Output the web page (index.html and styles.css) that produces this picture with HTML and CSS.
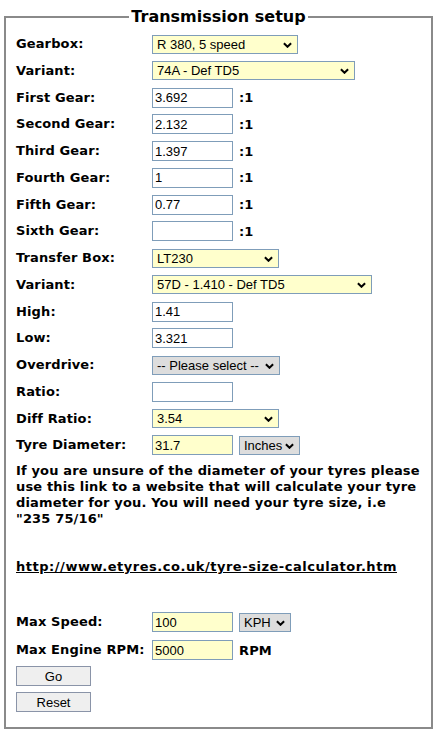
FILE: index.html
```html
<!DOCTYPE html>
<html>
<head>
<meta charset="utf-8">
<link rel="stylesheet" href="styles.css">
</head>
<body>
<form class="setup">
<fieldset class="box">
<legend class="title">Transmission setup</legend>
<div class="grid">
  <label class="lbl">Gearbox:</label>
  <div class="cell"><span class="sel w146 yellow"><span class="txt">R 380, 5 speed</span><svg class="chev" viewBox="0 0 10 6"><path d="M1 1 L5 5 L9 1" /></svg></span></div>

  <label class="lbl">Variant:</label>
  <div class="cell"><span class="sel w203 yellow"><span class="txt">74A - Def TD5</span><svg class="chev" viewBox="0 0 10 6"><path d="M1 1 L5 5 L9 1" /></svg></span></div>

  <label class="lbl">First Gear:</label>
  <div class="cell"><input class="inp" value="3.692"><span class="suffix">:1</span></div>

  <label class="lbl">Second Gear:</label>
  <div class="cell"><input class="inp" value="2.132"><span class="suffix">:1</span></div>

  <label class="lbl">Third Gear:</label>
  <div class="cell"><input class="inp" value="1.397"><span class="suffix">:1</span></div>

  <label class="lbl">Fourth Gear:</label>
  <div class="cell"><input class="inp" value="1"><span class="suffix">:1</span></div>

  <label class="lbl">Fifth Gear:</label>
  <div class="cell"><input class="inp" value="0.77"><span class="suffix">:1</span></div>

  <label class="lbl">Sixth Gear:</label>
  <div class="cell"><input class="inp" value=""><span class="suffix">:1</span></div>

  <label class="lbl">Transfer Box:</label>
  <div class="cell"><span class="sel w127 yellow"><span class="txt">LT230</span><svg class="chev" viewBox="0 0 10 6"><path d="M1 1 L5 5 L9 1" /></svg></span></div>

  <label class="lbl">Variant:</label>
  <div class="cell"><span class="sel w220 yellow"><span class="txt">57D - 1.410 - Def TD5</span><svg class="chev" viewBox="0 0 10 6"><path d="M1 1 L5 5 L9 1" /></svg></span></div>

  <label class="lbl">High:</label>
  <div class="cell"><input class="inp" value="1.41"></div>

  <label class="lbl">Low:</label>
  <div class="cell"><input class="inp" value="3.321"></div>

  <label class="lbl">Overdrive:</label>
  <div class="cell"><span class="sel w128 grey"><span class="txt">-- Please select --</span><svg class="chev" viewBox="0 0 10 6"><path d="M1 1 L5 5 L9 1" /></svg></span></div>

  <label class="lbl">Ratio:</label>
  <div class="cell"><input class="inp" value=""></div>

  <label class="lbl">Diff Ratio:</label>
  <div class="cell"><span class="sel w127 yellow"><span class="txt">3.54</span><svg class="chev" viewBox="0 0 10 6"><path d="M1 1 L5 5 L9 1" /></svg></span></div>

  <label class="lbl">Tyre Diameter:</label>
  <div class="cell"><input class="inp yellow" value="31.7"><span class="sel w61 grey unit"><span class="txt">Inches</span><svg class="chev" viewBox="0 0 10 6"><path d="M1 1 L5 5 L9 1" /></svg></span></div>
</div>

<p class="note">If you are unsure of the diameter of your tyres please use this link to a website that will calculate your tyre diameter for you. You will need your tyre size, i.e "235 75/16"<br><br><br><a class="link" href="#">http://www.etyres.co.uk/tyre-size-calculator.htm</a></p>

<div class="grid2">
  <label class="lbl">Max Speed:</label>
  <div class="cell"><input class="inp yellow" value="100"><span class="sel w52 grey unit"><span class="txt">KPH</span><svg class="chev" viewBox="0 0 10 6"><path d="M1 1 L5 5 L9 1" /></svg></span></div>

  <label class="lbl">Max Engine RPM:</label>
  <div class="cell"><input class="inp yellow" value="5000"><span class="suffix">RPM</span></div>
</div>

<div class="buttons">
  <button type="button" class="btn">Go</button>
  <button type="button" class="btn">Reset</button>
</div>
</fieldset>
</form>
</body>
</html>
```

FILE: styles.css
```css
html, body {
  margin: 0;
  padding: 0;
  background: #ffffff;
}

body {
  font-family: "DejaVu Sans", Verdana, sans-serif;
  font-size: 13px;
  color: #000;
}

.setup {
  margin: 0;
  padding: 7px 0 0 0;
}

.box {
  margin: 0 3px 0 4px;
  padding: 8px 10px 15px 10px;
  border: 2px solid #8a8a8a;
  min-width: 0;
}

.title {
  margin: 0 auto;
  padding: 0 2px;
  font-family: "DejaVu Sans", Verdana, sans-serif;
  font-weight: bold;
  font-size: 16px;
  line-height: 19px;
}

.grid {
  display: grid;
  grid-template-columns: 136px 1fr;
  grid-auto-rows: 20px;
  row-gap: 6.75px;
  align-items: center;
}

.grid2 {
  display: grid;
  grid-template-columns: 136px 1fr;
  grid-auto-rows: 20px;
  row-gap: 8px;
  align-items: center;
  margin-top: 37px;
}

.lbl {
  font-weight: bold;
  font-size: 13px;
  line-height: 16px;
  letter-spacing: 0.12px;
  white-space: nowrap;
}

.cell {
  display: flex;
  align-items: center;
  height: 20px;
}

.inp {
  box-sizing: border-box;
  width: 81px;
  height: 20px;
  margin: 0;
  padding: 0 2px;
  border: 1px solid #7f9db9;
  background: #ffffff;
  font-family: "Liberation Sans", Arial, sans-serif;
  font-size: 13px;
  color: #000;
  outline: none;
}

.yellow {
  background: #ffffcc;
}

.grey {
  background: #dddddd;
}

.suffix {
  font-weight: bold;
  margin-left: 6px;
  font-size: 13px;
  letter-spacing: 0.15px;
}

.sel {
  position: relative;
  box-sizing: border-box;
  display: inline-flex;
  align-items: center;
  height: 19px;
  border: 1px solid #7f9db9;
  padding: 0 0 0 4px;
  font-family: "Liberation Sans", Arial, sans-serif;
  font-size: 13px;
  white-space: nowrap;
  overflow: hidden;
}

.sel .txt {
  line-height: 17px;
}

.chev {
  position: absolute;
  right: 5px;
  top: 6px;
  width: 9px;
  height: 6px;
  fill: none;
  stroke: #000;
  stroke-width: 2.2;
}

.w146 { width: 146px; }
.w203 { width: 203px; }
.w127 { width: 127px; }
.w220 { width: 220px; }
.w128 { width: 128px; }
.w61 { width: 61px; }
.w52 { width: 52px; }

.unit {
  margin-left: 6px;
}

.note {
  margin: 8px 0 0 0;
  font-weight: bold;
  font-size: 13px;
  line-height: 16px;
  letter-spacing: 0.15px;
}

.link {
  color: #000;
  text-decoration: underline;
  letter-spacing: 0.53px;
}

.buttons {
  display: flex;
  flex-direction: column;
  align-items: flex-start;
  gap: 6px;
  margin-top: 6px;
}

.btn {
  box-sizing: border-box;
  width: 75px;
  height: 20px;
  margin: 0;
  padding: 0;
  border: 1px solid #8a94a8;
  background: #efefef;
  font-family: "Liberation Sans", Arial, sans-serif;
  font-size: 13px;
  color: #000;
}
```
